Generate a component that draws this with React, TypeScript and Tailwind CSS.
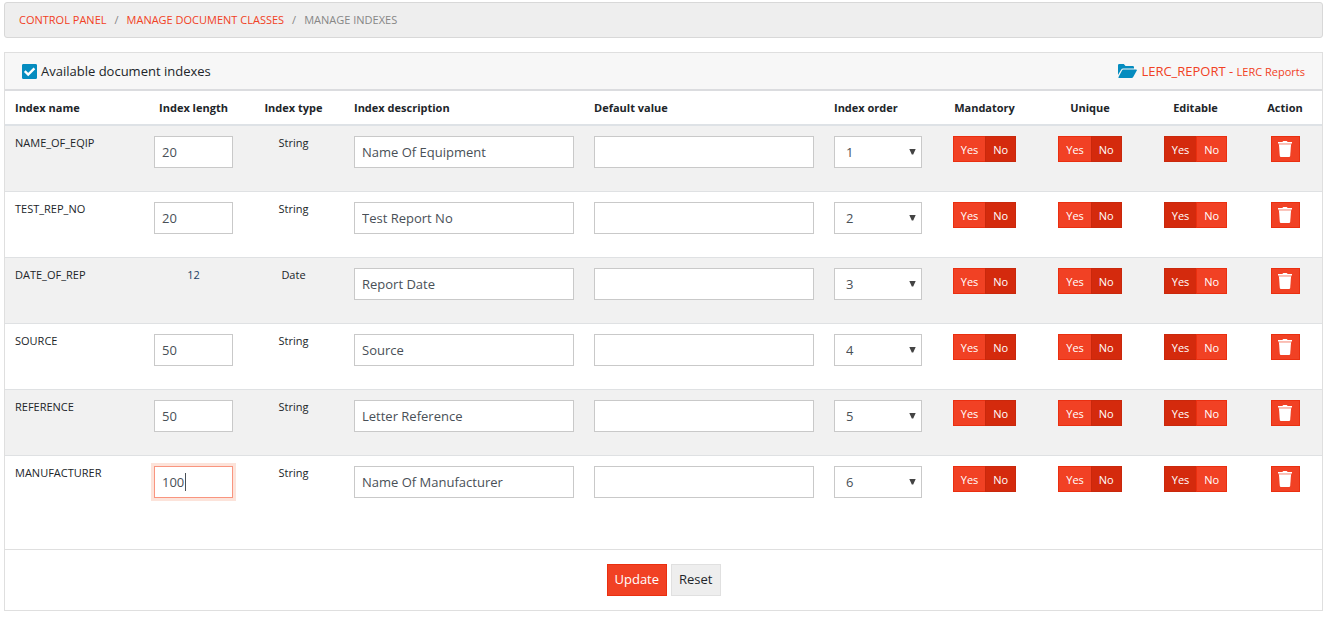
import { useState } from "react";

type Row = {
  name: string;
  length: string;
  fixedLength?: boolean;
  focused?: boolean;
  type: string;
  description: string;
};

const rows: Row[] = [
  { name: "NAME_OF_EQIP", length: "20", type: "String", description: "Name Of Equipment" },
  { name: "TEST_REP_NO", length: "20", type: "String", description: "Test Report No" },
  { name: "DATE_OF_REP", length: "12", fixedLength: true, type: "Date", description: "Report Date" },
  { name: "SOURCE", length: "50", type: "String", description: "Source" },
  { name: "REFERENCE", length: "50", type: "String", description: "Letter Reference" },
  { name: "MANUFACTURER", length: "100", focused: true, type: "String", description: "Name Of Manufacturer" },
];

const field = "block h-8 w-full border bg-white px-[7px] text-[13px] text-[#495057] outline-none";

function YesNo({ label, initial }: { label: string; initial: boolean }) {
  const [value, setValue] = useState(initial);
  const on = "bg-[#d42a0d] border-[#c9280c]";
  const off = "bg-[#f14124] border-[#ea2f10]";
  const base = "h-[26px] border px-[7px] pt-[2px] text-[11px] leading-4 text-white";
  return (
    <div role="group" aria-label={label} className="inline-flex align-top">
      <button type="button" aria-pressed={value} onClick={() => setValue(true)} className={`${base} border-r-0 ${value ? on : off}`}>
        Yes
      </button>
      <button type="button" aria-pressed={!value} onClick={() => setValue(false)} className={`${base} ${value ? off : on}`}>
        No
      </button>
    </div>
  );
}

function IndexRow({ row, order }: { row: Row; order: number }) {
  const last = order === rows.length;
  const cell = `px-[10px] pt-[10px] align-top ${last ? "h-[93px]" : "h-[66px] border-b border-[#dfe1e3]"}`;
  return (
    <tr className="odd:bg-[#f1f1f1]">
      <td className={cell}>{row.name}</td>
      <td className={`${cell} text-center`}>
        {row.fixedLength ? (
          <span className="text-[#1b3f66]">{row.length}</span>
        ) : (
          <div className="relative">
            <input
              aria-label={`${row.name} length`}
              defaultValue={row.length}
              className={`${field} ${row.focused ? "border-[#f9957f] ring-3 ring-[#fce3da]" : "border-[#c9c9c9]"}`}
            />
            {row.focused && <span className="absolute top-[7px] left-[31px] h-[18px] w-px bg-[#495057]" />}
          </div>
        )}
      </td>
      <td className={`${cell} text-center`}>{row.type}</td>
      <td className={cell}>
        <input aria-label={`${row.name} description`} defaultValue={row.description} className={`${field} border-[#c9c9c9]`} />
      </td>
      <td className={cell}>
        <input aria-label={`${row.name} default value`} className={`${field} border-[#c9c9c9]`} />
      </td>
      <td className={cell}>
        <div className="relative">
          <select
            aria-label={`${row.name} order`}
            defaultValue={order}
            className="block h-8 w-full appearance-none border border-[#c9c9c9] bg-white px-[11px] text-[13px] text-[#495057]"
          >
            {rows.map((r, i) => (
              <option key={r.name} value={i + 1}>
                {i + 1}
              </option>
            ))}
          </select>
          <svg viewBox="0 0 7 6" className="pointer-events-none absolute top-[13px] right-[6px] h-[6px] w-[7px] fill-[#444]">
            <path d="M.3 0h6.400L4.200 5.600H2.800z" />
          </svg>
        </div>
      </td>
      <td className={`${cell} text-center`}>
        <YesNo label={`${row.name} mandatory`} initial={false} />
      </td>
      <td className={`${cell} text-center`}>
        <YesNo label={`${row.name} unique`} initial={false} />
      </td>
      <td className={`${cell} text-center`}>
        <YesNo label={`${row.name} editable`} initial={true} />
      </td>
      <td className={`${cell} text-center`}>
        <button
          type="button"
          aria-label={`Delete ${row.name}`}
          className="inline-flex h-[26px] w-[29px] items-center justify-center border border-[#ea2f10] bg-[#f14124] align-top"
        >
          <svg viewBox="0 0 14 16" className="h-4 w-[14px] fill-white">
            <path d="M4.500 1Q4.700 0 5.500 0h3q.8 0 1 1H14v1.600H0V1z" />
            <path d="M.8 2.600h12.400v1.200H.8z" opacity=".75" />
            <path d="M1 3.700h12l-.8 11.200q-.1 1.100-1.200 1.100H3q-1.100 0-1.200-1.100z" />
          </svg>
        </button>
      </td>
    </tr>
  );
}

export default function App() {
  const heading = "h-[35px] border-b-2 border-[#dee2e6] px-[10px] font-bold whitespace-nowrap";
  return (
    <main className="bg-white pt-[2px] pr-[3px] pl-1 font-['Open_Sans',sans-serif] text-[11px] leading-[14px] text-[#212529]">
      <nav aria-label="Breadcrumb" className="rounded-[3px] border border-[#d8d8d8] bg-[#eeeeee] px-[14px] py-[10px]">
        <ol className="flex gap-2 text-[#868686]">
          <li><a href="#control-panel" className="text-[#f14124]">CONTROL PANEL</a></li>
          <li aria-hidden="true">/</li>
          <li><a href="#document-classes" className="text-[#f14124]">MANAGE DOCUMENT CLASSES</a></li>
          <li aria-hidden="true">/</li>
          <li aria-current="page">MANAGE INDEXES</li>
        </ol>
      </nav>

      <form className="mt-[14px] border border-[#dfdfdf]">
        <header className="flex h-[38px] items-center justify-between border-b-2 border-[#dbdcdf] bg-[#f7f7f7] pr-[17px] pl-[17px] text-[13px] leading-5">
          <label className="flex items-center gap-1">
            <span className="relative flex">
              <input type="checkbox" defaultChecked className="peer h-[15px] w-[15px] appearance-none rounded-[1px] border border-[#058cbf] bg-white checked:bg-[#058cbf]" />
              <svg viewBox="0 0 15 15" className="pointer-events-none absolute inset-0 hidden h-[15px] w-[15px] fill-none stroke-white stroke-[2.4] peer-checked:block">
                <path d="M2.800 7.200l3.400 3.400L12.400 4.400" />
              </svg>
            </span>
            Available document indexes
          </label>
          <div className="flex items-center gap-1 text-[#f14124]">
            <svg viewBox="0 0 19 14" className="h-[14px] w-[19px] fill-[#058cbf]">
              <path d="M0 1.200Q0 0 1.200 0h4.600l1.700 2h7.300q1.200 0 1.200 1.200V4.500H5.200q-1.400 0-2.100 1.200L0 11z" />
              <path d="M5.200 5.600H18.200q1.100 0 .6.900l-3.600 6.500q-.5 1-1.600 1H1q-1 0-.5-.9L4 6.400q.4-.8 1.200-.8z" />
            </svg>
            <a href="#lerc-report">
              LERC_REPORT - <span className="text-[11px]">LERC Reports</span>
            </a>
          </div>
        </header>

        <table className="w-full table-fixed border-separate border-spacing-0">
          <colgroup>
            <col className="w-[139px]" />
            <col className="w-[99px]" />
            <col className="w-[101px]" />
            <col />
            <col />
            <col className="w-[108px]" />
            <col className="w-[105px]" />
            <col className="w-[106px]" />
            <col className="w-[105px]" />
            <col className="w-[74px]" />
          </colgroup>
          <thead>
            <tr>
              <th className={`${heading} text-left`}>Index name</th>
              <th className={`${heading} text-center`}>Index length</th>
              <th className={`${heading} text-center`}>Index type</th>
              <th className={`${heading} text-left`}>Index description</th>
              <th className={`${heading} text-left`}>Default value</th>
              <th className={`${heading} text-left`}>Index order</th>
              <th className={`${heading} text-center`}>Mandatory</th>
              <th className={`${heading} text-center`}>Unique</th>
              <th className={`${heading} text-center`}>Editable</th>
              <th className={`${heading} text-center`}>Action</th>
            </tr>
          </thead>
          <tbody>
            {rows.map((row, i) => (
              <IndexRow key={row.name} row={row} order={i + 1} />
            ))}
          </tbody>
        </table>

        <footer className="flex justify-center gap-1 border-t border-[#dfdfdf] py-[14px] text-[13px]">
          <button type="submit" className="h-8 border border-[#ea2f10] bg-[#f14124] px-[7px] pb-[2px] text-white">Update</button>
          <button type="reset" className="h-8 border border-[#e0e0e0] bg-[#eeeeee] px-[7px] pb-[2px]">Reset</button>
        </footer>
      </form>
    </main>
  );
}
